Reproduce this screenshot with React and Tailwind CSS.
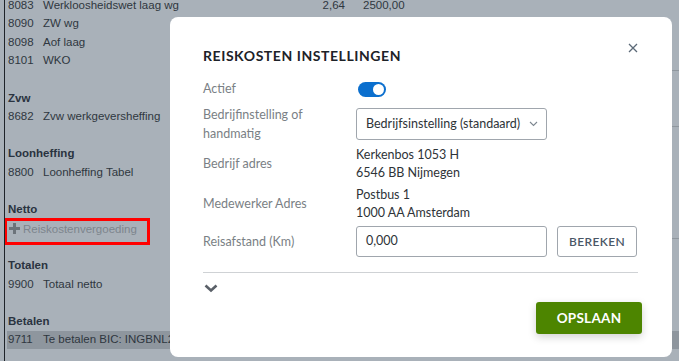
import React from "react";

const Row = ({ code, text, extra }) => (
  <div className="flex items-center h-[18.6px] whitespace-nowrap">
    <span className="w-[35px]">{code}</span>
    <span>{text}</span>
    {extra}
  </div>
);
const Head = ({ children }) => (
  <div className="flex items-center h-[18.6px] font-bold text-[#2a3340]">{children}</div>
);
const Blank = () => (
  <div className="flex h-[18.6px]">
    <div className="ml-auto w-[12px] border-t border-[#8f979e]"></div>
  </div>
);

export default function App() {
  return (
    <div className="relative w-[679px] h-[361px] overflow-hidden bg-[#a9b1b9]" style={{ fontFamily: '"Liberation Sans", Arial, sans-serif' }}>
      <div className="absolute left-[4px] top-0 bottom-0 w-px bg-[#1e2329]"></div>
      <div className="flex flex-col pl-[8px] mt-[-4px] text-[11.5px] text-[#2f3740]">
        <div className="flex items-center h-[18.6px] whitespace-nowrap">
          <span className="w-[35px]">8083</span>
          <span className="w-[160px]">Werkloosheidswet laag wg</span>
          <span className="w-[142px] text-right">2,64</span>
          <span className="ml-[18px]">2500,00</span>
        </div>
        <Row code="8090" text="ZW wg" />
        <Row code="8098" text="Aof laag" />
        <Row code="8101" text="WKO" />
        <Blank />
        <Head>Zvw</Head>
        <Row code="8682" text="Zvw werkgeversheffing" />
        <Blank />
        <Head>Loonheffing</Head>
        <Row code="8800" text="Loonheffing Tabel" />
        <div className="h-[18.6px]"></div>
        <Head>Netto</Head>
        <div className="flex items-start h-[18.6px] -ml-[4px]">
          <div className="flex items-start mt-[-1px] w-[146px] h-[27px] border-[3px] border-[#ff0000] pl-[2px] leading-[16px] text-[#7d858d]">
            <svg width="11" height="11" viewBox="0 0 11 11" className="mr-[3px] mt-[2px]"><path d="M4 0h3v4h4v3H7v4H4V7H0V4h4z" fill="#6c737a" /></svg>
            Reiskostenvergoeding
          </div>
        </div>
        <Blank />
        <Head>Totalen</Head>
        <Row code="9900" text="Totaal netto" />
        <div className="h-[18.6px]"></div>
        <Head>Betalen</Head>
        <div className="-ml-[1px] pl-[1px] bg-[#8e969e]">
          <Row code="9711" text="Te betalen BIC: INGBNL2A" />
        </div>
      </div>

      <div className="absolute left-[170px] top-[17px] w-[502px] h-[340px] bg-white rounded-[8px] pl-[33px] pr-[31px] pt-[27px] flex flex-col" style={{ fontFamily: 'Lato, "Noto Sans", sans-serif' }}>
        <svg width="10" height="10" viewBox="0 0 10 10" className="absolute right-[34px] top-[26px]"><path d="M1 1l8 8M9 1l-8 8" stroke="#5c6a78" strokeWidth="1.3" /></svg>
        <div className="flex items-center h-[22px]">
          <h2 className="text-[14px] font-bold tracking-[0.04em] text-[#1d2228]">REISKOSTEN INSTELLINGEN</h2>
        </div>

        <div className="mt-[8px] flex flex-col text-[12.5px] text-[#7a7f85]">
          <div className="flex items-center h-[30px]">
            <div className="w-[153px]">Actief</div>
            <div className="ml-[2px] w-[28px] h-[15px] rounded-full bg-[#0b6fce] flex items-center justify-end pr-[2px]">
              <div className="w-[11px] h-[11px] rounded-full bg-white"></div>
            </div>
          </div>

          <div className="flex items-center h-[32px] mt-[4px]">
            <div className="w-[153px] leading-[19px]">Bedrijfinstelling of<br />handmatig</div>
            <div className="w-[191px] h-[32px] border border-[#a0a6ad] rounded-[3px] flex items-center justify-between pl-[9px] pr-[8px] text-[#2e3338]">
              <span>Bedrijfsinstelling (standaard)</span>
              <svg width="9" height="6" viewBox="0 0 9 6"><path d="M1 1l3.5 3.5L8 1" stroke="#7d8790" strokeWidth="1.1" fill="none" /></svg>
            </div>
          </div>

          <div className="flex items-center h-[36px] mt-[6px]">
            <div className="w-[153px] pt-[1px]">Bedrijf adres</div>
            <div className="leading-[18px] text-[#2e3338]">Kerkenbos 1053 H<br />6546 BB Nijmegen</div>
          </div>

          <div className="flex items-center h-[36px] mt-[4px]">
            <div className="w-[153px]">Medewerker Adres</div>
            <div className="leading-[18px] text-[#2e3338]">Postbus 1<br />1000 AA Amsterdam</div>
          </div>

          <div className="flex items-center h-[31px] mt-[4px]">
            <div className="w-[153px] pt-[1px]">Reisafstand (Km)</div>
            <div className="flex gap-[10px]">
              <div className="w-[191px] h-[31px] border border-[#a0a6ad] rounded-[3px] flex items-center pl-[9px] text-[#2e3338]">0,000</div>
              <div className="w-[80px] h-[31px] border border-[#a0a6ad] rounded-[3px] flex items-center justify-center text-[12px] font-semibold tracking-[0.03em] text-[#4a5766]">BEREKEN</div>
            </div>
          </div>
        </div>

        <div className="mt-[15px] mr-[3px] border-t border-[#cfd2d5]"></div>
        <svg width="14" height="9" viewBox="0 0 14 9" className="mt-[11px] ml-[1px]"><path d="M1.5 1.5l5.5 5 5.5-5" stroke="#5a6068" strokeWidth="2.6" fill="none" /></svg>
        <div className="flex justify-end mt-[9px]">
          <div className="w-[106px] h-[32px] rounded-[3px] bg-[#4d8500] text-white font-bold text-[13.5px] tracking-[0.02em] flex items-center justify-center shadow-[0_3px_8px_rgba(0,0,0,0.18)] -mr-[1px]">OPSLAAN</div>
        </div>
      </div>
    </div>
  );
}
